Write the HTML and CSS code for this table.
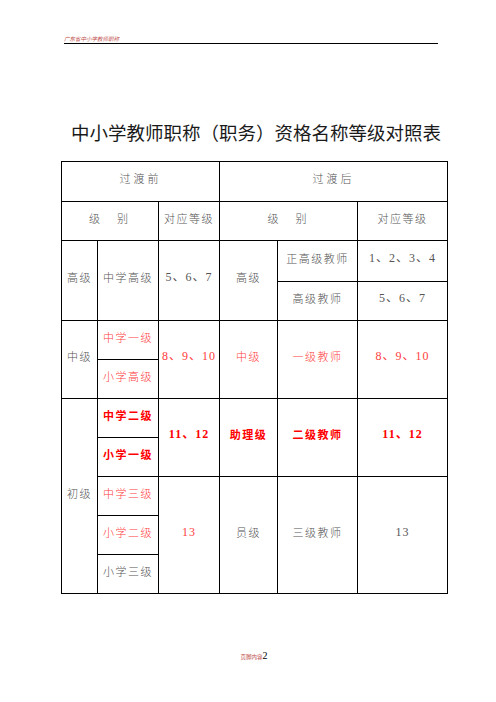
FILE: index.html
```html
<!DOCTYPE html>
<html lang="zh-CN">
<head>
<meta charset="utf-8">
<title>中小学教师职称（职务）资格名称等级对照表</title>
<link rel="stylesheet" href="styles.css">
</head>
<body>
<div class="page">
  <div class="running-head">广东省中小学教师职称</div>
  <h1 class="title">中小学教师职称（职务）资格名称等级对照表</h1>
  <table class="grid">
    <colgroup>
      <col class="c1"><col class="c2"><col class="c3"><col class="c4"><col class="c5"><col class="c6">
    </colgroup>
    <tr class="r-h1">
      <td colspan="3" class="wide">过渡前</td>
      <td colspan="3" class="wide">过渡后</td>
    </tr>
    <tr class="r-u">
      <td colspan="2" class="wide">级&emsp;别</td>
      <td>对应等级</td>
      <td colspan="2" class="wide">级&emsp;别</td>
      <td>对应等级</td>
    </tr>
    <tr class="r-u2">
      <td rowspan="2">高级</td>
      <td rowspan="2">中学高级</td>
      <td rowspan="2" class="num">5、6、7</td>
      <td rowspan="2">高级</td>
      <td>正高级教师</td>
      <td class="num">1、2、3、4</td>
    </tr>
    <tr class="r-u">
      <td>高级教师</td>
      <td class="num">5、6、7</td>
    </tr>
    <tr class="r-u">
      <td rowspan="2">中级</td>
      <td class="red">中学一级</td>
      <td rowspan="2" class="num red">8、9、10</td>
      <td rowspan="2" class="red">中级</td>
      <td rowspan="2" class="red">一级教师</td>
      <td rowspan="2" class="num red">8、9、10</td>
    </tr>
    <tr class="r-u">
      <td class="red">小学高级</td>
    </tr>
    <tr class="r-u">
      <td rowspan="5">初级</td>
      <td class="bred">中学二级</td>
      <td rowspan="2" class="num bred">11、12</td>
      <td rowspan="2" class="bred">助理级</td>
      <td rowspan="2" class="bred">二级教师</td>
      <td rowspan="2" class="num bred">11、12</td>
    </tr>
    <tr class="r-u">
      <td class="bred">小学一级</td>
    </tr>
    <tr class="r-u">
      <td class="red">中学三级</td>
      <td rowspan="3" class="num red">13</td>
      <td rowspan="3">员级</td>
      <td rowspan="3">三级教师</td>
      <td rowspan="3" class="num">13</td>
    </tr>
    <tr class="r-u">
      <td class="red">小学二级</td>
    </tr>
    <tr class="r-u">
      <td>小学三级</td>
    </tr>
  </table>
  <div class="footer"><span class="foot-label">页脚内容</span><span class="foot-num">2</span></div>
</div>
</body>
</html>
```
FILE: styles.css
```css
html, body {
  margin: 0;
  padding: 0;
  background: #ffffff;
}
.page {
  width: 496px;
  padding-top: 36px;
  font-family: "Noto Sans CJK SC", "Noto Sans", sans-serif;
}
.running-head {
  margin: 0 58px 0 64px;
  padding-bottom: 1px;
  border-bottom: 1px solid #000;
  font-size: 5.5px;
  line-height: 6px;
  color: #c0504d;
  font-style: italic;
}
.title {
  margin: 76px 0 0 0;
  padding-left: 16px;
  text-align: center;
  font-size: 18.5px;
  line-height: 24px;
  font-weight: 400;
  color: #1a1a1a;
}
.grid {
  margin: 17px 0 0 61px;
  width: 386px;
  border-collapse: collapse;
  table-layout: fixed;
}
.c1 { width: 36px; }
.c2 { width: 61px; }
.c3 { width: 61px; }
.c4 { width: 58px; }
.c5 { width: 80px; }
.c6 { width: 90px; }
.grid td {
  border: 1px solid #000;
  padding: 0 0 7px 0;
  text-align: center;
  vertical-align: middle;
  font-size: 11px;
  font-weight: 300;
  line-height: 14px;
  letter-spacing: 1.5px;
  color: #555555;
  white-space: nowrap;
  overflow: hidden;
}
.grid td.wide { letter-spacing: 3px; }
.r-h1 td { height: 32px; }
.r-u td { height: 31px; }
.r-u2 td { height: 33px; }
.grid td.num {
  font-family: "Liberation Serif", "Noto Sans CJK SC", serif;
  font-size: 12px;
  font-weight: 400;
  letter-spacing: 1px;
}
.grid td.red { color: #ff4040; }
.grid td.bred { color: #ff0000; font-weight: 700; }
.footer {
  margin-top: 52px;
  padding-left: 12px;
  padding-bottom: 30px;
  text-align: center;
  line-height: 12px;
}
.foot-label {
  font-size: 5.5px;
  color: #c0504d;
}
.foot-num {
  font-family: "Liberation Serif", serif;
  font-size: 10px;
  color: #000;
}
```
